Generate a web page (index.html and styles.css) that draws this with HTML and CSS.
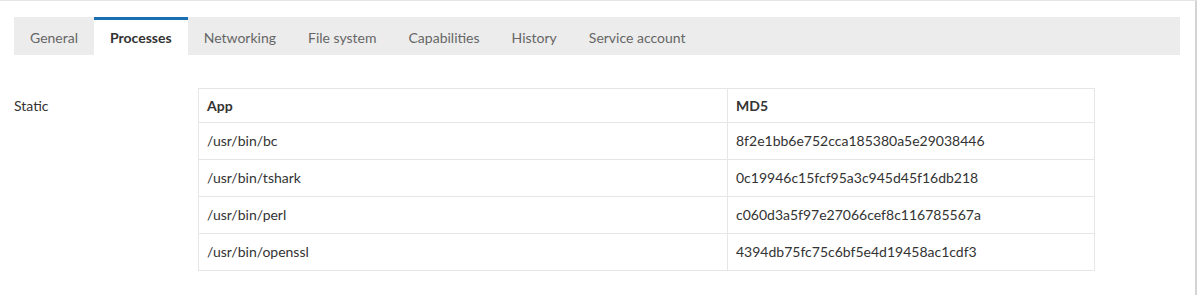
FILE: index.html
```html
<!DOCTYPE html>
<html lang="en">
<head>
    <meta charset="UTF-8">
    <title>Processes</title>
    <link rel="stylesheet" href="styles.css">
</head>
<body>
    <div class="panel">
        <div class="tabs">
            <div class="tab">General</div>
            <div class="tab active">Processes</div>
            <div class="tab">Networking</div>
            <div class="tab">File system</div>
            <div class="tab">Capabilities</div>
            <div class="tab">History</div>
            <div class="tab">Service account</div>
        </div>
        <div class="section">
            <div class="label">Static</div>
            <table class="proc-table">
                <thead>
                    <tr>
                        <th class="col-app">App</th>
                        <th>MD5</th>
                    </tr>
                </thead>
                <tbody>
                    <tr><td>/usr/bin/bc</td><td>8f2e1bb6e752cca185380a5e29038446</td></tr>
                    <tr><td>/usr/bin/tshark</td><td>0c19946c15fcf95a3c945d45f16db218</td></tr>
                    <tr><td>/usr/bin/perl</td><td>c060d3a5f97e27066cef8c116785567a</td></tr>
                    <tr><td>/usr/bin/openssl</td><td>4394db75fc75c6bf5e4d19458ac1cdf3</td></tr>
                </tbody>
            </table>
        </div>
    </div>
</body>
</html>
```

FILE: styles.css
```css
body {
    margin: 0;
    padding: 0;
    font-family: Lato, "Open Sans", sans-serif;
    color: #333;
    background: #fff;
}

.panel {
    height: 295px;
    border-top: 1px solid #e4e4e4;
    border-right: 2px solid #d4d4d4;
    padding: 16px 15px 0 14px;
    box-sizing: border-box;
}

/* tab strip */
.tabs {
    display: flex;
    background: #ececec;
    height: 38px;
}
.tab {
    padding: 0 16px;
    font-size: 14px;
    color: #666;
    border-top: 3px solid transparent;
    line-height: 35px;
}
.tab.active {
    background: #fff;
    color: #333;
    font-weight: bold;
    border-top-color: #1a6fb0;
}

.section {
    display: flex;
    margin-top: 33px;
}
.label {
    width: 184px;
    font-size: 14px;
    padding-top: 9px;
    line-height: 18px;
}

.proc-table {
    width: 897px;
    border-collapse: collapse;
    font-size: 14px;
}
.proc-table th,
.proc-table td {
    border: 1px solid #e6e6e6;
    text-align: left;
    padding: 9px 8px;
    line-height: 18px;
}
.proc-table th {
    font-weight: bold;
    padding: 8px 8px 7px;
}
.proc-table .col-app {
    width: 512px;
}
```
